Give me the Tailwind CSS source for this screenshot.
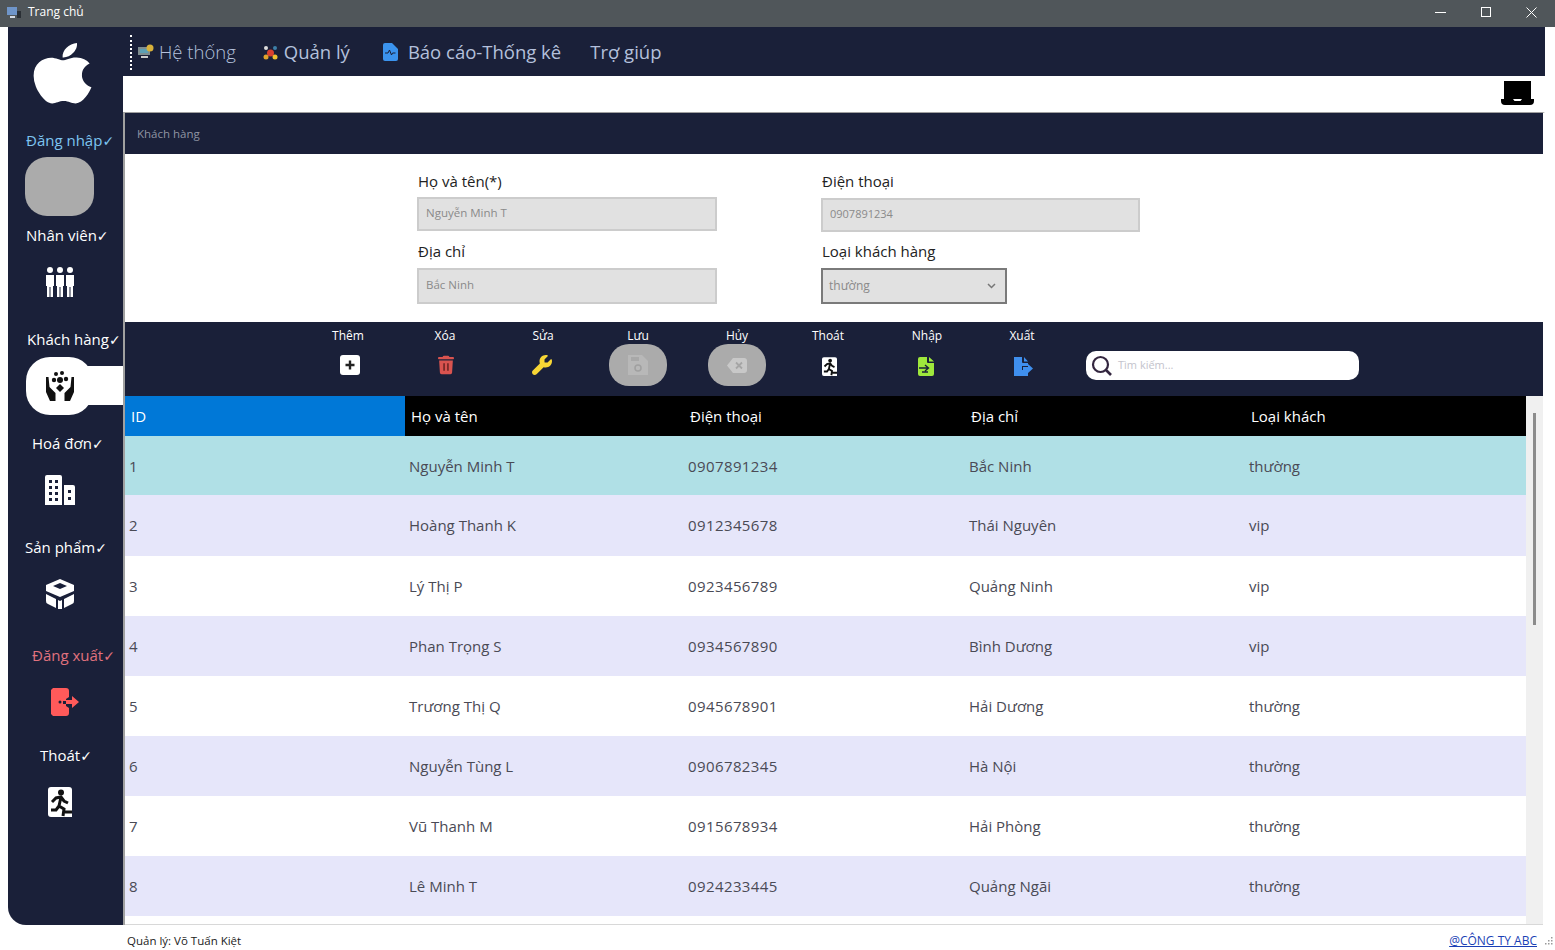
<!DOCTYPE html>
<html lang="vi">
<head>
<meta charset="utf-8">
<title>Trang chủ</title>
<script src="https://cdn.jsdelivr.net/npm/@tailwindcss/browser@4"></script>
</head>
<body class="bg-white font-['Open_Sans','Noto_Sans',sans-serif] overflow-hidden h-[950px]">

<svg width="0" height="0" class="absolute">
  <defs>
    <symbol id="runner" viewBox="0 0 24 30">
      <path fill="#fff" d="M3 0h18a3 3 0 013 3v27H3a3 3 0 01-3-3V3a3 3 0 013-3z"/>
      <circle cx="13" cy="5.500" r="3" fill="#111"/>
      <path d="M4 15l4-4 5-1 3 4 4 2M13 10l-2 9 5 3-1 7M11 19l-3 4H3M17 25h7" fill="none" stroke="#111" stroke-width="3"/>
    </symbol>
  </defs>
</svg>

<!-- title bar -->
<header class="h-[27px] pb-[3px] bg-[#50565a] flex items-center text-white text-[12px]">
  <svg class="ml-[7px] mr-[6px]" width="15" height="13" viewBox="0 0 15 13"><rect x="0" y="1" width="10" height="8" fill="#6f95c9"/><rect x="3" y="10" width="5" height="2" fill="#d5dbe4"/><rect x="10" y="5" width="4" height="7" fill="#2a2f35"/></svg>
  <span>Trang chủ</span>
  <div class="ml-auto flex items-center">
    <svg class="mr-[35px]" width="11" height="11" viewBox="0 0 11 11"><path d="M0 5.500h11" stroke="#fff"/></svg>
    <svg class="mr-[35px]" width="10" height="10" viewBox="0 0 10 10"><rect x=".5" y=".5" width="9" height="9" fill="none" stroke="#fff"/></svg>
    <svg class="mr-[18px]" width="11" height="11" viewBox="0 0 11 11"><path d="M.5.5l10 10M10.500.5l-10 10" stroke="#fff"/></svg>
  </div>
</header>

<div class="flex h-[898px] pl-2 pr-[10px]">
  <!-- sidebar -->
  <aside class="w-[115px] shrink-0 bg-[#1a2039] rounded-bl-[18px] text-[15px] text-white">
    <div class="h-[101px] flex items-start justify-center pl-[3px] pt-[15px] pr-[10px]">
      <svg width="59" height="62" viewBox="0 24 384 460" preserveAspectRatio="none"><path fill="#fff" d="M318.700 268.700c-.2-36.700 16.400-64.400 50-84.800-18.800-26.900-47.200-41.700-84.700-44.600-35.500-2.800-74.300 20.700-88.500 20.700-15 0-49.400-19.700-76.400-19.700C63.300 141.200 4 184.800 4 273.500q0 39.300 14.400 81.200c12.800 36.700 59 126.700 107.200 125.200 25.200-.6 43-17.900 75.800-17.900 31.800 0 48.300 17.900 76.400 17.900 48.600-.7 90.400-82.500 102.600-119.300-65.200-30.700-61.700-90-61.700-91.900zm-56.600-164.200c27.300-32.400 24.800-61.900 24-72.500-24.100 1.400-52 16.400-67.900 34.900-17.500 19.800-27.800 44.300-25.600 71.900 26.100 2 49.900-11.400 69.500-34.300z"/></svg>
    </div>

    <div class="mb-[7px]">
      <div class="h-6 leading-6 pl-[18px] text-[#7dc4f0] whitespace-nowrap">Đăng nhập<span class="text-[14px] leading-none font-['DejaVu_Sans']">✓</span></div>
      <div class="mt-[5px] ml-[17px] w-[69px] h-[59px] rounded-[22px] bg-[#ababab]"></div>
    </div>

    <div class="mb-4">
      <div class="h-6 leading-6 pl-[18px] whitespace-nowrap">Nhân viên<span class="text-[14px] leading-none font-['DejaVu_Sans']">✓</span></div>
      <div class="mt-[6px] ml-[17px] w-[68px] h-[58px] flex items-center justify-center">
        <svg class="ml-[2px]" width="30" height="30" viewBox="0 0 30 30" fill="#fff"><circle cx="5" cy="3" r="3"/><circle cx="15" cy="3" r="3"/><circle cx="25" cy="3" r="3"/><path d="M1 8h8v11H8v11H5.500V20h-1v10H2V19H1zM11 8h8v11h-1v11h-2.500V20h-1v10H12V19h-1zM21 8h8v11h-1v11h-2.500V20h-1v10H22V19h-1z"/></svg>
      </div>
    </div>

    <div class="mb-4">
      <div class="h-6 leading-6 pl-[19px] whitespace-nowrap">Khách hàng<span class="text-[14px] leading-none font-['DejaVu_Sans']">✓</span></div>
      <div class="relative mt-[6px] ml-[18px] w-[67px] h-[58px] rounded-[24px] bg-white flex items-center justify-center">
        <div class="absolute left-[50px] top-[9px] w-[47px] h-[39px] bg-white"></div>
        <svg class="relative" width="30" height="30" viewBox="0 0 30 30" fill="#111"><circle cx="11" cy="3" r="2"/><circle cx="17" cy="2" r="2"/><circle cx="9" cy="9" r="2.200"/><circle cx="21" cy="8" r="2.200"/><circle cx="15" cy="9" r="3"/><path d="M15 13l4 4-4 4-4-4z"/><path d="M1 6h2.500l1 10 6 6v8H5L1 21zM29 6h-2.500l-1 10-6 6v8H25l4-9z"/></svg>
      </div>
    </div>

    <div class="mb-4">
      <div class="h-6 leading-6 pl-[24px] whitespace-nowrap">Hoá đơn<span class="text-[14px] leading-none font-['DejaVu_Sans']">✓</span></div>
      <div class="mt-[6px] ml-[17px] w-[68px] h-[58px] flex items-center justify-center">
        <svg class="ml-[2px]" width="30" height="30" viewBox="0 0 30 30"><path fill="#fff" d="M0 2a2 2 0 012-2h13a2 2 0 012 2v28H0zM19 10h9a2 2 0 012 2v18H19z"/><path fill="#1a2039" d="M4 5h3v3H4zM10 5h3v3h-3zM4 11h3v3H4zM10 11h3v3h-3zM4 17h3v3H4zM10 17h3v3h-3zM4 23h3v3H4zM10 23h3v3h-3zM23 15h3v3h-3zM23 22h3v3h-3z"/></svg>
      </div>
    </div>

    <div class="mb-5">
      <div class="h-6 leading-6 pl-[17px] whitespace-nowrap">Sản phẩm<span class="text-[14px] leading-none font-['DejaVu_Sans']">✓</span></div>
      <div class="mt-[6px] ml-[17px] w-[68px] h-[58px] flex items-center justify-center">
        <svg class="ml-[2px]" width="30" height="30" viewBox="0 0 30 30" fill="#fff"><path d="M15 0l14 6v6l-14 6-14-6V6z"/><path fill="#1a2039" d="M15 4l7 3-7 3-7-3z"/><path d="M1 15l10 5v9L3 25a3 3 0 01-2-3zM29 15l-10 5v9l8-4a3 3 0 002-3zM13 21l2 1 2-1v9h-4z"/></svg>
      </div>
    </div>

    <div class="mb-3">
      <div class="h-6 leading-6 pl-[24px] text-[#e0727e] whitespace-nowrap">Đăng xuất<span class="text-[14px] leading-none font-['DejaVu_Sans']">✓</span></div>
      <div class="mt-[6px] ml-[17px] w-[68px] h-[58px] flex items-center justify-center">
        <svg class="ml-[12px]" width="28" height="28" viewBox="0 0 28 28"><path fill="#ff5a5a" d="M2 0h13a3 3 0 013 3v6l-3 2v2h-3v3h3v2l3 2v5a3 3 0 01-3 3H2l-2-2V2z"/><circle cx="9" cy="14" r="1.500" fill="#1a2039"/><path fill="#ff5a5a" d="M15 12h6V8l7 6-7 6v-4h-6z"/></svg>
      </div>
    </div>

    <div>
      <div class="h-6 leading-6 pl-[32px] whitespace-nowrap">Thoát<span class="text-[14px] leading-none font-['DejaVu_Sans']">✓</span></div>
      <div class="mt-[6px] ml-[17px] w-[68px] h-[58px] flex items-center justify-center">
        <svg class="ml-[2px]" width="24" height="30"><use href="#runner"/></svg>
      </div>
    </div>
  </aside>

  <!-- main -->
  <main class="flex-1 min-w-0 flex flex-col">
    <nav class="h-[49px] pt-[1px] bg-[#1a2039] flex items-center text-[18.500px] text-[#b4c0dc] relative">
      <div class="ml-[7px] w-[2px] h-[35px] border-l-2 border-dotted border-white"></div>
      <svg class="ml-[6px]" width="16" height="16" viewBox="0 0 16 16"><rect y="3" width="12" height="8" fill="#7f8d8f"/><rect x="2" y="5" width="8" height="4" fill="#5da0b5"/><rect x="3" y="12" width="7" height="2" fill="#ccc"/><circle cx="12" cy="4" r="3.500" fill="#d8b13a"/></svg>
      <span class="ml-[5px] font-light">Hệ thống</span>
      <svg class="ml-[27px]" width="15" height="15" viewBox="0 0 15 15"><circle cx="7.500" cy="8" r="3.500" fill="#d9412f"/><circle cx="3" cy="3" r="2" fill="#ddd"/><circle cx="12" cy="3" r="2" fill="#3d7fa8"/><circle cx="3" cy="12" r="2.500" fill="#e0a32c"/><circle cx="12" cy="12" r="2.500" fill="#f2c230"/></svg>
      <span class="ml-[6px]">Quản lý</span>
      <svg class="ml-[33px]" width="15" height="18" viewBox="0 0 15 18"><path fill="#3b93ee" d="M2 0h7l6 6v10a2 2 0 01-2 2H2a2 2 0 01-2-2V2a2 2 0 012-2z"/><path d="M2 10h3l1.500-3 2 5 1-2h3" fill="none" stroke="#1a2039" stroke-width="1"/></svg>
      <span class="ml-[10px]">Báo cáo-Thống kê</span>
      <span class="ml-[29px]">Trợ giúp</span>
    </nav>

    <div class="h-9 flex justify-end items-start pr-[11px] pt-[5px]">
      <svg width="33" height="25" viewBox="0 0 33 25"><rect x="3" y="0" width="27" height="18" fill="#000"/><path fill="#000" d="M0 18h12l1.500 2h6l1.500-2h12v2a4 4 0 01-4 4H4a4 4 0 01-4-4z"/></svg>
    </div>

    <section class="flex-1 min-h-0 flex flex-col border-t border-l-2 border-r-2 border-[#a0a0a0] border-r-white bg-white">
      <div class="h-[41px] bg-[#1a2039] flex items-center pl-3 text-[11.500px] text-[#8f94a3]">Khách hàng</div>

      <!-- form -->
      <form class="h-[168px] pl-[292px] pt-[16px] grid grid-cols-[300px_319px] gap-x-[104px] content-start text-[15px] text-[#222]">
        <label class="block">
          <span class="block h-[22px] leading-[22px] pl-px">Họ và tên(*)</span>
          <input class="mt-[5px] block w-[300px] h-[34px] pb-[3px] bg-[#e1e1e1] border-2 border-[#cccccc] px-[7px] text-[11.500px] text-[#8a8a8a]" value="Nguyễn Minh T" disabled>
        </label>
        <label class="block">
          <span class="block h-[22px] leading-[22px] pl-px">Điện thoại</span>
          <input class="mt-[6px] block w-[319px] h-[34px] pb-[3px] bg-[#e1e1e1] border-2 border-[#cccccc] px-[7px] text-[11px] text-[#8a8a8a]" value="0907891234" disabled>
        </label>
        <label class="block mt-[8px]">
          <span class="block h-[22px] leading-[22px] pl-px">Địa chỉ</span>
          <input class="mt-[6px] block w-[300px] h-[36px] pb-[3px] bg-[#e1e1e1] border-2 border-[#cccccc] px-[7px] text-[11.500px] text-[#8a8a8a]" value="Bắc Ninh" disabled>
        </label>
        <label class="block mt-[8px]">
          <span class="block h-[22px] leading-[22px] pl-px">Loại khách hàng</span>
          <div class="mt-[6px] w-[186px] h-[36px] bg-[#e1e1e1] border-2 border-[#7a7a7a] pl-[6px] pr-[9px] flex items-center justify-between text-[12px] text-[#8a8a8a]">
            <span>thường</span>
            <svg width="9" height="6" viewBox="0 0 9 6"><path d="M1 1l3.500 3.500L8 1" fill="none" stroke="#777" stroke-width="1.500"/></svg>
          </div>
        </label>
      </form>

      <!-- toolbar -->
      <div class="h-[74px] bg-[#1a2039] flex pl-[193px] text-[12px] text-white">
        <div class="w-[60px] flex flex-col items-center">
          <span class="h-[25px] leading-[28px]">Thêm</span>
          <div class="h-[36px] flex items-center justify-center"><svg class="ml-[4px]" width="20" height="20" viewBox="0 0 20 20"><rect width="20" height="20" rx="3" fill="#fff"/><path d="M10 5.500v9M5.500 10h9" stroke="#222" stroke-width="2.400"/></svg></div>
        </div>
        <div class="ml-[37px] w-[60px] flex flex-col items-center">
          <span class="h-[25px] leading-[28px]">Xóa</span>
          <div class="h-[36px] flex items-center justify-center"><svg class="ml-[2px]" width="16" height="20" viewBox="0 0 448 512"><path fill="#d9534f" d="M135.200 17.700L128 32H32C14.300 32 0 46.300 0 64S14.300 96 32 96H416c17.700 0 32-14.300 32-32s-14.300-32-32-32H320l-7.200-14.300C307.400 6.800 296.300 0 284.200 0H163.800c-12.100 0-23.200 6.800-28.600 17.700zM416 128H32L53.200 467c1.600 25.300 22.600 45 47.900 45H346.900c25.300 0 46.300-19.700 47.900-45L416 128z"/><path d="M170 210v210M278 210v210" stroke="#6d2523" stroke-width="44"/></svg></div>
        </div>
        <div class="ml-[38px] w-[60px] flex flex-col items-center">
          <span class="h-[25px] leading-[28px]">Sửa</span>
          <div class="h-[36px] flex items-center justify-center"><svg class="mr-[2px]" width="20" height="20" viewBox="0 0 512 512"><path fill="#f7d635" d="M352 320c88.400 0 160-71.600 160-160c0-15.300-2.200-30.100-6.200-44.200c-3.100-10.800-16.400-13.200-24.300-5.300l-76.800 76.800c-3 3-7.100 4.700-11.300 4.700H336c-8.800 0-16-7.200-16-16V118.600c0-4.200 1.700-8.300 4.700-11.300l76.800-76.800c7.900-7.900 5.400-21.200-5.300-24.300C382.100 2.200 367.300 0 352 0C263.600 0 192 71.600 192 160c0 19.100 3.400 37.500 9.500 54.500L19.900 396.100C7.200 408.800 0 426.100 0 444.100C0 481.600 30.400 512 67.900 512c18 0 35.300-7.200 48-19.900L297.500 310.500c17 6.200 35.400 9.500 54.500 9.500z"/></svg></div>
        </div>
        <div class="ml-[35px] w-[60px] flex flex-col items-center">
          <span class="h-[22px] leading-[28px]">Lưu</span>
          <div class="w-[58px] h-[42px] rounded-[20px] bg-[#ababab] flex items-center justify-center"><svg width="20" height="20" viewBox="0 0 20 20"><path fill="#b8b8b8" d="M0 0h14l6 6v14H0z"/><circle cx="10" cy="13" r="3" fill="none" stroke="#a0a0a0" stroke-width="1.500"/><rect x="3" y="2" width="8" height="4" fill="#a8a8a8"/></svg></div>
        </div>
        <div class="ml-[39px] w-[60px] flex flex-col items-center">
          <span class="h-[22px] leading-[28px]">Hủy</span>
          <div class="w-[58px] h-[42px] rounded-[20px] bg-[#ababab] flex items-center justify-center"><svg width="20" height="15" viewBox="0 0 20 15"><path fill="#c8c8c8" d="M6 0h11a3 3 0 013 3v9a3 3 0 01-3 3H6L0 7.500z"/><path d="M9 4.500l6 6M15 4.500l-6 6" stroke="#a5a5a5" stroke-width="1.800"/></svg></div>
        </div>
        <div class="ml-[31px] w-[60px] flex flex-col items-center">
          <span class="h-[25px] leading-[28px]">Thoát</span>
          <div class="h-[36px] flex items-center justify-center"><svg class="mt-[2px] ml-[2px]" width="15" height="19"><use href="#runner"/></svg></div>
        </div>
        <div class="ml-[39px] w-[60px] flex flex-col items-center">
          <span class="h-[25px] leading-[28px]">Nhập</span>
          <div class="h-[36px] flex items-center justify-center"><svg class="mt-[2px] mr-[2px]" width="16" height="19" viewBox="0 0 16 19"><path fill="#9fe83c" d="M2 0h7v5a1 1 0 001 1h6v11a2 2 0 01-2 2H2a2 2 0 01-2-2V2a2 2 0 012-2zM11 0l5 4.500h-5z"/><path d="M1 11h9M7 8l3.500 3L7 14M10 15H4" fill="none" stroke="#1a2039" stroke-width="1.400"/></svg></div>
        </div>
        <div class="ml-[35px] w-[60px] flex flex-col items-center">
          <span class="h-[25px] leading-[28px]">Xuất</span>
          <div class="h-[36px] flex items-center justify-center"><svg class="mt-[2px] ml-[2px]" width="19" height="19" viewBox="0 0 19 19"><path fill="#3f8fee" d="M0 0h8v5a1 1 0 001 1h5v3H8v4h6v6H0zM10 0l4 4.500h-4z"/><path fill="#3f8fee" d="M9 10h5V7l5 4.500-5 4.500v-3H9z"/></svg></div>
        </div>
        <div class="ml-[34px] mt-[29px] w-[273px] h-[29px] rounded-[10px] bg-white flex items-center pl-[5px]">
          <svg width="22" height="22" viewBox="0 0 22 22"><circle cx="9.500" cy="9.500" r="7.500" fill="none" stroke="#33263f" stroke-width="2.200"/><path d="M15 15l5 5" stroke="#33263f" stroke-width="2.600"/></svg>
          <span class="ml-[5px] text-[11px] text-[#c3c3cc]">Tìm kiếm...</span>
        </div>
      </div>

      <!-- table -->
      <div class="flex-1 min-h-0 flex border-b border-[#d8d8d8] overflow-hidden">
        <div class="w-[1401px] shrink-0 text-[15px] text-[#4a4a55]">
          <div class="grid grid-cols-[280px_279px_281px_280px_281px] h-10 bg-black text-white items-center">
            <div class="h-10 leading-10 pl-[6px] bg-[#0078d7]">ID</div>
            <div class="pl-[6px]">Họ và tên</div>
            <div class="pl-[6px]">Điện thoại</div>
            <div class="pl-[6px]">Địa chỉ</div>
            <div class="pl-[6px]">Loại khách</div>
          </div>
          <div class="grid grid-cols-[280px_279px_281px_280px_281px] h-[59px] pt-[2px] items-center bg-[#b0e0e6]">
            <div class="pl-1">1</div><div class="pl-1">Nguyễn Minh T</div><div class="pl-1 tracking-[0.4px]">0907891234</div><div class="pl-1">Bắc Ninh</div><div class="pl-1">thường</div>
          </div>
          <div class="grid grid-cols-[280px_279px_281px_280px_281px] h-[61px] items-center bg-[#e6e6fa]">
            <div class="pl-1">2</div><div class="pl-1">Hoàng Thanh K</div><div class="pl-1 tracking-[0.4px]">0912345678</div><div class="pl-1">Thái Nguyên</div><div class="pl-1">vip</div>
          </div>
          <div class="grid grid-cols-[280px_279px_281px_280px_281px] h-[60px] items-center bg-white">
            <div class="pl-1">3</div><div class="pl-1">Lý Thị P</div><div class="pl-1 tracking-[0.4px]">0923456789</div><div class="pl-1">Quảng Ninh</div><div class="pl-1">vip</div>
          </div>
          <div class="grid grid-cols-[280px_279px_281px_280px_281px] h-[60px] items-center bg-[#e6e6fa]">
            <div class="pl-1">4</div><div class="pl-1">Phan Trọng S</div><div class="pl-1 tracking-[0.4px]">0934567890</div><div class="pl-1">Bình Dương</div><div class="pl-1">vip</div>
          </div>
          <div class="grid grid-cols-[280px_279px_281px_280px_281px] h-[60px] items-center bg-white">
            <div class="pl-1">5</div><div class="pl-1">Trương Thị Q</div><div class="pl-1 tracking-[0.4px]">0945678901</div><div class="pl-1">Hải Dương</div><div class="pl-1">thường</div>
          </div>
          <div class="grid grid-cols-[280px_279px_281px_280px_281px] h-[60px] items-center bg-[#e6e6fa]">
            <div class="pl-1">6</div><div class="pl-1">Nguyễn Tùng L</div><div class="pl-1 tracking-[0.4px]">0906782345</div><div class="pl-1">Hà Nội</div><div class="pl-1">thường</div>
          </div>
          <div class="grid grid-cols-[280px_279px_281px_280px_281px] h-[60px] items-center bg-white">
            <div class="pl-1">7</div><div class="pl-1">Vũ Thanh M</div><div class="pl-1 tracking-[0.4px]">0915678934</div><div class="pl-1">Hải Phòng</div><div class="pl-1">thường</div>
          </div>
          <div class="grid grid-cols-[280px_279px_281px_280px_281px] h-[60px] items-center bg-[#e6e6fa]">
            <div class="pl-1">8</div><div class="pl-1">Lê Minh T</div><div class="pl-1 tracking-[0.4px]">0924233445</div><div class="pl-1">Quảng Ngãi</div><div class="pl-1">thường</div>
          </div>
        </div>
        <!-- scrollbar -->
        <div class="flex-1 bg-[#f0f0f0] pt-[17px] pl-[7px]">
          <div class="w-[3px] h-[212px] bg-[#8c8c8c]"></div>
        </div>
      </div>
    </section>
  </main>
</div>

<footer class="h-[25px] flex items-center justify-between pl-[127px] text-[11.500px] text-[#222]">
  <span class="mt-[7px]">Quản lý: Võ Tuấn Kiệt</span>
  <div class="flex items-center mt-[7px]">
    <a href="#" class="text-[12px] text-[#1a3fb5] underline">@CÔNG TY ABC</a>
    <svg class="ml-2 mr-[2px]" width="8" height="8" viewBox="0 0 8 8" fill="#9a9a9a"><rect x="6" y="0" width="1.500" height="1.500"/><rect x="3" y="3" width="1.500" height="1.500"/><rect x="6" y="3" width="1.500" height="1.500"/><rect x="0" y="6" width="1.500" height="1.500"/><rect x="3" y="6" width="1.500" height="1.500"/><rect x="6" y="6" width="1.500" height="1.500"/></svg>
  </div>
</footer>
</body>
</html>
